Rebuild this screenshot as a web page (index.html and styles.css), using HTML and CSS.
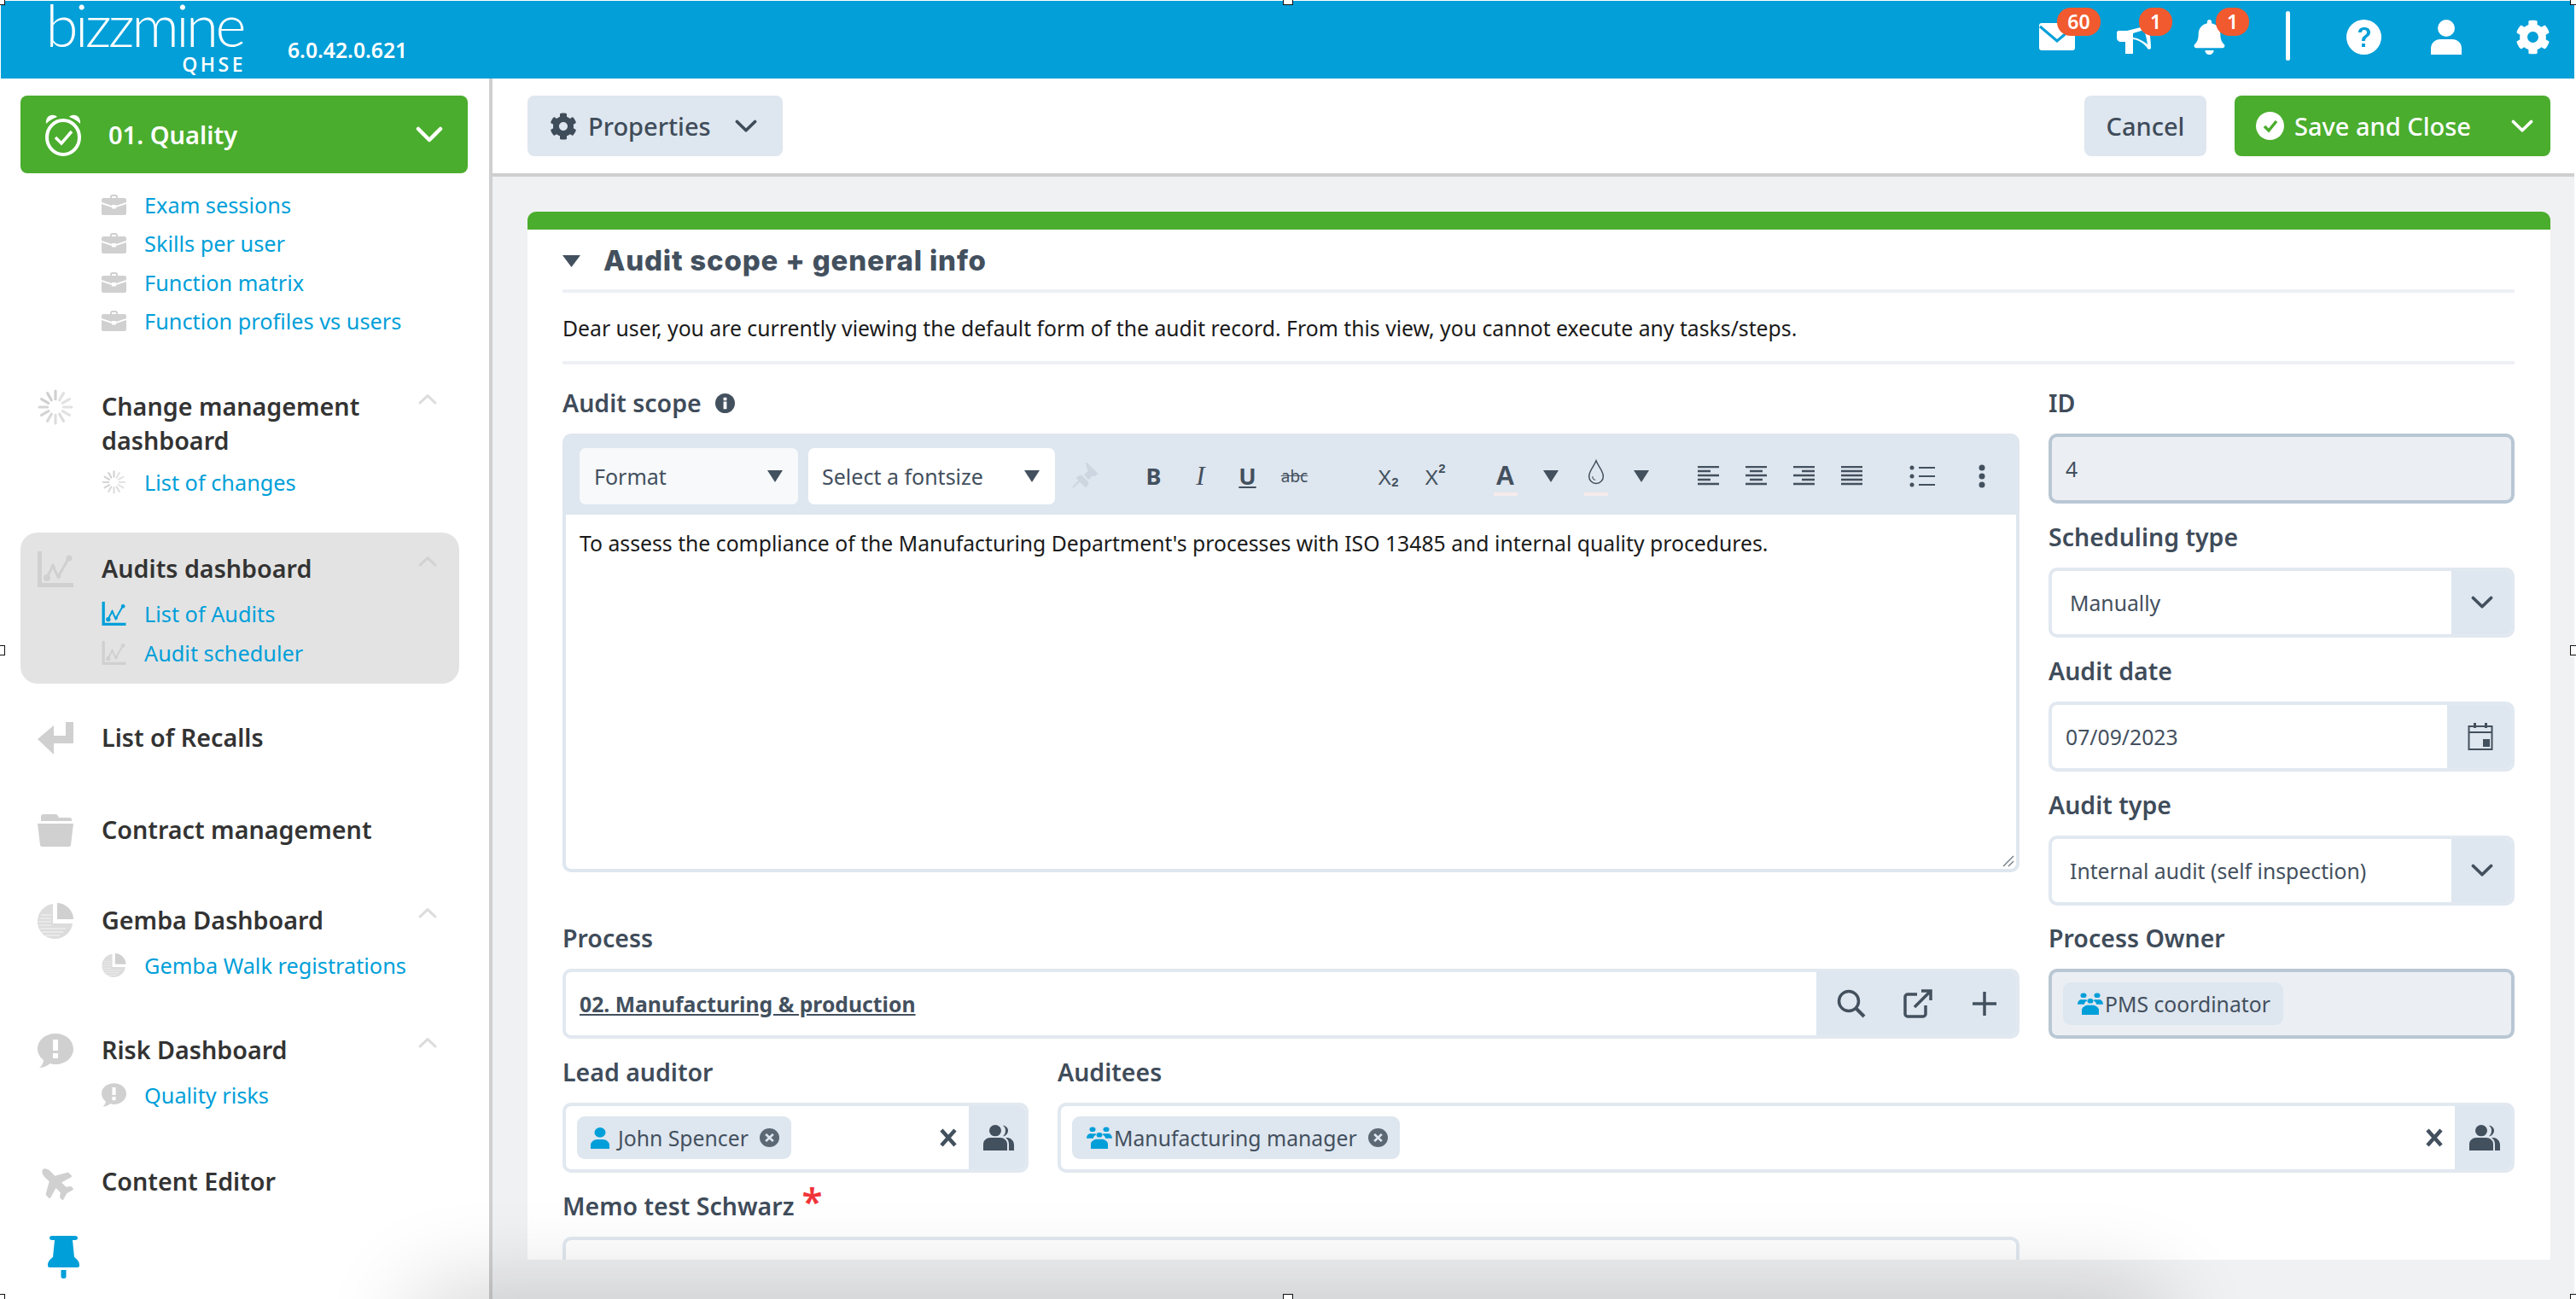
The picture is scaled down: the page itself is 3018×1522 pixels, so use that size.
FILE: index.html
```html
<!DOCTYPE html>
<html lang="en">
<head>
<meta charset="utf-8">
<title>BizzMine QHSE</title>
<link rel="stylesheet" href="styles.css">
</head>
<body>
<svg class="defs" aria-hidden="true">
  <symbol id="i-cog" viewBox="0 0 512 512"><path d="M487.4 315.7l-42.6-24.6c4.3-23.2 4.3-47 0-70.2l42.6-24.6c4.9-2.8 7.1-8.6 5.5-14-11.1-35.6-30-67.8-54.7-94.6-3.8-4.1-10-5.1-14.8-2.3L380.8 110c-17.9-15.4-38.5-27.3-60.8-35.1V25.8c0-5.6-3.9-10.5-9.4-11.7-36.7-8.2-74.3-7.8-109.2 0-5.5 1.2-9.4 6.1-9.4 11.7V75c-22.2 7.9-42.8 19.8-60.8 35.1L88.7 85.5c-4.9-2.8-11-1.9-14.8 2.3-24.7 26.7-43.6 58.9-54.7 94.6-1.7 5.4.6 11.2 5.5 14L67.3 221c-4.3 23.2-4.3 47 0 70.2l-42.6 24.6c-4.9 2.8-7.1 8.6-5.5 14 11.1 35.6 30 67.8 54.7 94.6 3.8 4.1 10 5.1 14.8 2.3l42.6-24.6c17.9 15.4 38.5 27.3 60.8 35.1v49.2c0 5.6 3.9 10.5 9.4 11.7 36.7 8.2 74.3 7.8 109.2 0 5.5-1.2 9.4-6.1 9.4-11.7v-49.2c22.2-7.9 42.8-19.8 60.8-35.1l42.6 24.6c4.9 2.8 11 1.9 14.8-2.3 24.7-26.7 43.6-58.9 54.7-94.6 1.5-5.5-.7-11.3-5.6-14.1zM256 336c-44.1 0-80-35.9-80-80s35.9-80 80-80 80 35.9 80 80-35.9 80-80 80z"/></symbol>
  <symbol id="i-bell" viewBox="0 0 448 512"><path d="M224 512c35.32 0 63.97-28.65 63.97-63.97H160.03C160.03 483.35 188.68 512 224 512zm215.39-149.71c-19.32-20.76-55.47-51.99-55.47-154.29 0-77.7-54.48-139.9-127.94-155.16V32c0-17.67-14.32-32-31.98-32s-31.98 14.33-31.98 32v20.84C118.56 68.1 64.08 130.3 64.08 208c0 102.3-36.15 133.53-55.47 154.29-6 6.45-8.66 14.16-8.61 21.71.11 16.4 12.98 32 32.1 32h383.8c19.12 0 32-15.6 32.1-32 .05-7.55-2.61-15.27-8.61-21.71z"/></symbol>
  <symbol id="i-plane" viewBox="0 0 576 576"><g transform="rotate(225 288 288) translate(0 32)"><path d="M480 192H365.71L260.61 8.06A16.014 16.014 0 0 0 246.71 0h-65.5c-10.63 0-18.3 10.17-15.38 20.39L214.86 192H112l-43.2-57.6c-3.02-4.03-7.77-6.4-12.8-6.4H16.01C5.6 128-2.04 137.78.49 147.88L32 256 .49 364.12C-2.04 374.22 5.6 384 16.01 384H56c5.04 0 9.78-2.37 12.8-6.4L112 320h102.86l-49.03 171.6c-2.92 10.22 4.75 20.4 15.38 20.4h65.5c5.74 0 11.04-3.08 13.89-8.06L365.71 320H480c35.35 0 96-28.65 96-64s-60.65-64-96-64z"/></g></symbol>
  <symbol id="i-briefcase" viewBox="0 0 29 24"><path d="M10 4V2.500C10 1 11 0 12.500 0h4C18 0 19 1 19 2.500V4h8c1 0 2 1 2 2v3L17 13v-1h-5v1L0 9V6c0-1 1-2 2-2zM12 4h5V2h-5z"/><path d="M0 11l12 4v1.500h5V15l12-4v11c0 1-1 2-2 2H2c-1 0-2-1-2-2z"/></symbol>
  <symbol id="i-spinner" viewBox="0 0 40 40"><g stroke-width="3" stroke-linecap="round" stroke="#d0d0d0">
    <path d="M20 2v9" /><path d="M20 29v9" opacity=".7"/><path d="M2 20h9" opacity=".9"/><path d="M29 20h9" opacity=".6"/>
    <path d="M11 4.400l4.500 7.800" /><path d="M24.500 27.800l4.500 7.800" opacity=".7"/><path d="M4.400 11l7.800 4.500"/><path d="M27.800 24.500l7.800 4.500" opacity=".6"/>
    <path d="M29 4.400l-4.500 7.800" opacity=".6"/><path d="M15.500 27.800L11 35.600" opacity=".8"/><path d="M35.600 11l-7.800 4.500" opacity=".6"/><path d="M12.200 24.500L4.400 29" opacity=".9"/>
  </g></symbol>
  <symbol id="i-chart" viewBox="0 0 42 42"><path d="M0 0h5v37h37v5H0z"/><path d="M10 32l8-15 6 13L37 7" fill="none" stroke="currentColor" stroke-width="3"/><circle cx="11" cy="31" r="4"/><circle cx="18" cy="18" r="2.500"/><circle cx="25" cy="29" r="2.500"/><circle cx="37" cy="8" r="3.500"/></symbol>
  <symbol id="i-recall" viewBox="0 0 42 38"><path d="M33 0h9v25H19v13L0 20 19 4v12h14z"/></symbol>
  <symbol id="i-folder" viewBox="0 0 42 38"><path d="M4 4V3c0-2 1-3 3-3h14c2 0 3 2 4 4h13c1 0 2 1 2 2v2H4z"/><path d="M0 11h42l-3 25c0 1-1 2-2 2H5c-1 0-2-1-2-2z"/></symbol>
  <symbol id="i-pie" viewBox="0 0 42 42"><path d="M18 1v23h23c-1 10-10 18-20.500 18C9 42 0 33 0 21.500 0 11 8 2 18 1z" opacity=".75"/><path d="M23 0c10 0 19 9 19 19H23z"/><path d="M3 30h30M2 26h14M1 22h15M2 18h14M4 14h12M5 34h25M9 38h17" stroke="#fff" stroke-opacity=".5" stroke-width="1.300"/></symbol>
  <symbol id="i-risk" viewBox="0 0 42 40"><path fill-rule="evenodd" d="M21 0c12 0 21 8 21 18s-9 18-21 18c-2 0-4 0-6-1-3 2-7 5-13 5 3-2 5-6 5-9C3 28 0 23 0 18 0 8 9 0 21 0zM18 7v13h6V7zM18 23v6h6v-6z"/></symbol>
  <symbol id="i-user" viewBox="0 0 22 34" preserveAspectRatio="none"><ellipse cx="11" cy="8" rx="6.500" ry="8"/><path d="M0 34v-6c0-5 4-9 8-9h6c4 0 8 4 8 9v6z"/></symbol>
  <symbol id="i-team" viewBox="0 0 32 32" preserveAspectRatio="none"><circle cx="8" cy="4" r="3.500"/><circle cx="24" cy="4" r="3.500"/><circle cx="16" cy="12" r="3.500"/><path d="M1 17c0-4 2-7 4-7h6c1 0 1 1 1 2-2 1-3 3-3 5zM31 17c0-4-2-7-4-7h-6c-1 0-1 1-1 2 2 1 3 3 3 5zM6 32v-7c0-4 4-7 7-7h6c3 0 7 3 7 7v7z"/></symbol>
  <symbol id="i-users" viewBox="0 0 36 36" preserveAspectRatio="none"><ellipse cx="14" cy="8" rx="7" ry="8"/><path d="M23 1c3 0 6 3 6 7s-3 8-6 8c2-2 3-5 3-8s-1-5-3-7z"/><path d="M0 36v-9c0-5 4-9 8-9h12c4 0 8 4 8 9v9z"/><path d="M29 18c4 1 7 5 7 10v8h-6v-9c0-3-1-7-4-9z"/></symbol>
  <symbol id="i-x" viewBox="0 0 22 22"><path d="M3 2l16 18M19 2L3 20" fill="none" stroke="currentColor" stroke-width="4.500"/></symbol>
  <symbol id="i-tri" viewBox="0 0 20 16" preserveAspectRatio="none"><path d="M0 0h20L10 16z"/></symbol>
  <symbol id="i-chev" viewBox="0 0 32 20" preserveAspectRatio="none"><path d="M3 3l13 13L29 3" fill="none" stroke="currentColor" stroke-width="4.500" stroke-linecap="round" stroke-linejoin="round"/></symbol>
  <symbol id="i-close" viewBox="0 0 24 24" preserveAspectRatio="none"><circle cx="12" cy="12" r="12"/><path d="M7.500 7.500l9 9M16.500 7.500l-9 9" stroke="#dee6ef" stroke-width="3"/></symbol>
</svg>

<div class="app">
  <header class="topbar">
    <div class="logo">
      <span class="logo-word">bizzmine</span>
      <span class="logo-sub">QHSE</span>
    </div>
    <span class="version">6.0.42.0.621</span>
    <div class="top-actions">
      <span class="notif notif-mail">
        <svg class="ic-mail" viewBox="0 0 42 32"><rect width="42" height="32" rx="3" fill="#fff"/><path d="M1 4l20 17L41 4" fill="none" stroke="#009fd9" stroke-width="3"/></svg>
        <b class="badge badge-wide">60</b>
      </span>
      <span class="notif notif-mega">
        <svg class="ic-mega" viewBox="0 0 40 33"><path fill="#fff" d="M2 6h10L36 0c3 8 4 19 4 27l-3 1C33 22 27 17 19 16v17h-9V19H5c-3 0-5-2-5-5V8c0-1 1-2 2-2z"/><path fill="#009fd9" d="M19 9l13-4c2 6 3 11 4 17-5-4-10-7-17-8z"/></svg>
        <b class="badge">1</b>
      </span>
      <span class="notif notif-bell">
        <svg class="ic-bell"><use href="#i-bell"/></svg>
        <b class="badge">1</b>
      </span>
      <span class="top-sep"></span>
      <svg class="ic-help" viewBox="0 0 41 41"><circle cx="20.500" cy="20.500" r="20.500" fill="#fff"/><path d="M14 15c0-4 3-6 7-6s7 2 7 6c0 5-6 5-6 10h-4c0-7 6-6 6-10 0-2-1-3-3-3s-3 1-3 3zM18 28h4v4h-4z" fill="#009fd9"/></svg>
      <svg class="ic-person" viewBox="0 0 36 41"><ellipse cx="18" cy="10" rx="10" ry="10"/><path d="M0 41v-7c0-7 5-11 11-11h14c6 0 11 4 11 11v7z"/></svg>
      <svg class="ic-cog-top"><use href="#i-cog"/></svg>
    </div>
  </header>

  <div class="shell">
    <aside class="sidebar">
      <div class="module">
        <svg class="module-icon" viewBox="0 0 44 50"><path d="M2 12C1 5 6 1 11 2c2 0 3 1 4 2C9 6 5 9 2 12zM42 12c1-7-4-11-9-10-2 0-3 1-4 2 6 2 10 5 13 8z" fill="#fff"/><ellipse cx="22" cy="28" rx="19" ry="20" fill="none" stroke="#fff" stroke-width="4"/><path d="M13 28l7 7 12-14" fill="none" stroke="#fff" stroke-width="3.500"/></svg>
        <span class="module-name">01. Quality</span>
        <svg class="module-chev"><use href="#i-chev"/></svg>
      </div>
      <ul class="sublist sublist-first">
        <li class="subitem"><svg class="subicon"><use href="#i-briefcase"/></svg><a class="sublink">Exam sessions</a></li>
        <li class="subitem"><svg class="subicon"><use href="#i-briefcase"/></svg><a class="sublink">Skills per user</a></li>
        <li class="subitem"><svg class="subicon"><use href="#i-briefcase"/></svg><a class="sublink">Function matrix</a></li>
        <li class="subitem"><svg class="subicon"><use href="#i-briefcase"/></svg><a class="sublink">Function profiles vs users</a></li>
      </ul>

      <section class="group group-wider">
        <div class="group-head"><svg class="group-icon"><use href="#i-spinner"/></svg><h3 class="group-title">Change management dashboard</h3><svg class="group-chev"><use href="#i-chev"/></svg></div>
        <ul class="sublist sublist-tight">
          <li class="subitem"><svg class="subicon"><use href="#i-spinner"/></svg><a class="sublink">List of changes</a></li>
        </ul>
      </section>

      <section class="group group-active">
        <div class="group-head"><svg class="group-icon"><use href="#i-chart"/></svg><h3 class="group-title">Audits dashboard</h3><svg class="group-chev"><use href="#i-chev"/></svg></div>
        <ul class="sublist">
          <li class="subitem"><svg class="subicon subicon-blue"><use href="#i-chart"/></svg><a class="sublink">List of Audits</a></li>
          <li class="subitem"><svg class="subicon"><use href="#i-chart"/></svg><a class="sublink">Audit scheduler</a></li>
        </ul>
      </section>

      <section class="group group-leaf">
        <div class="group-head"><svg class="group-icon"><use href="#i-recall"/></svg><h3 class="group-title">List of Recalls</h3></div>
      </section>
      <section class="group group-leaf group-narrower">
        <div class="group-head"><svg class="group-icon"><use href="#i-folder"/></svg><h3 class="group-title">Contract management</h3></div>
      </section>
      <section class="group">
        <div class="group-head"><svg class="group-icon"><use href="#i-pie"/></svg><h3 class="group-title">Gemba Dashboard</h3><svg class="group-chev"><use href="#i-chev"/></svg></div>
        <ul class="sublist">
          <li class="subitem"><svg class="subicon"><use href="#i-pie"/></svg><a class="sublink">Gemba Walk registrations</a></li>
        </ul>
      </section>
      <section class="group group-wider">
        <div class="group-head"><svg class="group-icon"><use href="#i-risk"/></svg><h3 class="group-title">Risk Dashboard</h3><svg class="group-chev"><use href="#i-chev"/></svg></div>
        <ul class="sublist">
          <li class="subitem"><svg class="subicon"><use href="#i-risk"/></svg><a class="sublink">Quality risks</a></li>
        </ul>
      </section>
      <section class="group group-leaf">
        <div class="group-head"><svg class="group-icon"><use href="#i-plane"/></svg><h3 class="group-title">Content Editor</h3></div>
      </section>
      <svg class="pin" viewBox="0 0 37 50"><path d="M5 0h27c2 0 3 1 3 2.500S34 5 32 5h-3l2 20c3 2 6 5 6 9v1c0 1-1 2-2 2H2c-1 0-2-1-2-2v-1c0-4 3-7 6-9L8 5H5C3 5 2 4 2 2.500S3 0 5 0z"/><path d="M15.500 40h6v8c0 1-1 2-3 2s-3-1-3-2z"/></svg>
    </aside>

    <main class="main">
      <div class="toolbar">
        <button class="btn btn-props">
          <svg class="btn-cog"><use href="#i-cog"/></svg>
          <span>Properties</span>
          <svg class="btn-chev"><use href="#i-chev"/></svg>
        </button>
        <div class="toolbar-right">
          <button class="btn btn-cancel">Cancel</button>
          <button class="btn btn-save">
            <svg class="save-check" viewBox="0 0 33 33"><circle cx="16.500" cy="16.500" r="16.500" fill="#fff"/><path d="M10 17l5 5 9-11" fill="none" stroke="#4aad2d" stroke-width="3.500"/></svg>
            <span>Save and Close</span>
            <svg class="save-chev"><use href="#i-chev"/></svg>
          </button>
        </div>
      </div>

      <div class="content">
        <article class="card">
          <header class="card-head">
            <svg class="card-tri"><use href="#i-tri"/></svg>
            <h2 class="card-title">Audit scope + general info</h2>
          </header>
          <p class="notice">Dear user, you are currently viewing the default form of the audit record. From this view, you cannot execute any tasks/steps.</p>

          <div class="form-top">
            <div class="col-wide">
              <div class="label"><span>Audit scope</span><svg class="info" viewBox="0 0 24 24"><circle cx="12" cy="12" r="12"/><path d="M10 10h4v9h-4zM10 5h4v3.500h-4z" fill="#fff"/></svg></div>
              <div class="editor">
                <div class="ed-tools">
                  <div class="ed-select ed-select-format"><span>Format</span><svg class="ed-tri"><use href="#i-tri"/></svg></div>
                  <div class="ed-select ed-select-size"><span>Select a fontsize</span><svg class="ed-tri"><use href="#i-tri"/></svg></div>
                  <span class="tool tool-pin"><svg class="ic-off" viewBox="0 0 32 32"><path d="M19 1l12 12-3 2-2-1-6 6c1 3 0 6-2 8L8 18c2-2 5-3 8-2l6-6-1-2zM11 21l-8 8" fill="#cdd6e0" stroke="#cdd6e0" stroke-width="2"/><path d="M3 3l26 26" stroke="#dee6ef" stroke-width="2"/></svg></span>
                  <span class="tool tool-b lead-27">B</span>
                  <span class="tool tool-i">I</span>
                  <span class="tool tool-u">U</span>
                  <span class="tool tool-s">abc</span>
                  <span class="tool tool-sx lead-55">X<sub>2</sub></span>
                  <span class="tool tool-sx">X<sup>2</sup></span>
                  <span class="tool tool-color lead-28">A<i class="swatch"></i></span>
                  <span class="tool tool-n"><svg class="ed-tri"><use href="#i-tri"/></svg></span>
                  <span class="tool tool-n tool-drop"><svg class="ic-drop" viewBox="0 0 24 36"><path d="M12 1c3 8 10 14 10 22a10 10 0 0 1-20 0C2 15 9 9 12 1z" fill="none" stroke="#43505e" stroke-width="1.800"/><path d="M7 23c0 3 2 5 4 5" fill="none" stroke="#43505e" stroke-width="1.500"/></svg><i class="swatch"></i></span>
                  <span class="tool tool-n"><svg class="ed-tri"><use href="#i-tri"/></svg></span>
                  <span class="tool tool-a lead-24"><svg class="ic-align" viewBox="0 0 25 24"><path d="M0 1h25M0 6h15M0 11h25M0 16h15M0 21h25"/></svg></span>
                  <span class="tool tool-a"><svg class="ic-align" viewBox="0 0 25 24"><path d="M0 1h25M5 6h15M0 11h25M5 16h15M0 21h25"/></svg></span>
                  <span class="tool tool-a"><svg class="ic-align" viewBox="0 0 25 24"><path d="M0 1h25M10 6h15M0 11h25M10 16h15M0 21h25"/></svg></span>
                  <span class="tool tool-a"><svg class="ic-align" viewBox="0 0 25 24"><path d="M0 1h25M0 6h25M0 11h25M0 16h25M0 21h25"/></svg></span>
                  <span class="tool tool-a lead-27"><svg class="ic-list" viewBox="0 0 30 26"><path d="M11 3h19M11 13h19M11 23h19" stroke="#43505e" stroke-width="2.200"/><circle cx="3" cy="3" r="2.500"/><circle cx="3" cy="13" r="2.500"/><circle cx="3" cy="23" r="2.500"/></svg></span>
                  <span class="tool tool-a lead-14"><svg class="ic-more" viewBox="0 0 8 28"><circle cx="4" cy="4" r="3.500"/><circle cx="4" cy="14" r="3.500"/><circle cx="4" cy="24" r="3.500"/></svg></span>
                </div>
                <div class="ed-body">To assess the compliance of the Manufacturing Department's processes with ISO 13485 and internal quality procedures.
                  <svg class="resize" viewBox="0 0 14 14"><path d="M1 13L13 1M7 13l6-6" stroke="#6b7680" stroke-width="1.300"/></svg>
                </div>
              </div>
            </div>
            <div class="col-narrow">
              <div class="field-group">
                <div class="label">ID</div>
                <div class="input input-ro"><span class="val val-ro">4</span></div>
              </div>
              <div class="field-group">
                <div class="label">Scheduling type</div>
                <div class="input"><span class="val val-sel">Manually</span><span class="addon addon-sel"><svg class="addon-chev"><use href="#i-chev"/></svg></span></div>
              </div>
              <div class="field-group">
                <div class="label">Audit date</div>
                <div class="input"><span class="val val-ro">07/09/2023</span><span class="addon addon-date"><svg class="ic-cal" viewBox="0 0 30 34"><path d="M1.500 5h27v27h-27zM1.500 12h27" fill="none" stroke="#43505e" stroke-width="2"/><path d="M7 1h3v6H7zM20 1h3v6h-3zM18 20h8v9h-8z" fill="#43505e"/></svg></span></div>
              </div>
              <div class="field-group">
                <div class="label">Audit type</div>
                <div class="input"><span class="val val-sel">Internal audit (self inspection)</span><span class="addon addon-sel"><svg class="addon-chev"><use href="#i-chev"/></svg></span></div>
              </div>
            </div>
          </div>

          <div class="form-row form-row-main">
            <div class="field-group">
              <div class="label">Process</div>
              <div class="input"><a class="val val-link">02. Manufacturing &amp; production</a>
                <span class="addon addon-proc">
                  <svg class="ic-tool" viewBox="0 0 34 34"><circle cx="14" cy="14" r="11.500" fill="none" stroke="#43505e" stroke-width="3.500"/><path d="M22 22l10 10" stroke="#43505e" stroke-width="4"/></svg>
                  <svg class="ic-tool" viewBox="0 0 34 34"><path d="M16 6H5a3 3 0 0 0-3 3v20a3 3 0 0 0 3 3h18a3 3 0 0 0 3-3V19M13 21L31 3M21 2h11v11" fill="none" stroke="#43505e" stroke-width="3.500"/></svg>
                  <svg class="ic-tool" viewBox="0 0 34 34"><path d="M17 3v28M3 17h28" stroke="#43505e" stroke-width="3.500"/></svg>
                </span>
              </div>
            </div>
            <div class="field-group">
              <div class="label">Process Owner</div>
              <div class="input input-ro"><span class="chip chip-ro"><svg class="chip-team"><use href="#i-team"/></svg>PMS coordinator</span></div>
            </div>
          </div>

          <div class="form-row form-row-people">
            <div class="field-group">
              <div class="label">Lead auditor</div>
              <div class="input">
                <span class="chip"><svg class="chip-user"><use href="#i-user"/></svg>John Spencer<svg class="chip-close"><use href="#i-close"/></svg></span>
                <svg class="ic-clear"><use href="#i-x"/></svg>
                <span class="addon addon-people"><svg class="ic-users"><use href="#i-users"/></svg></span>
              </div>
            </div>
            <div class="field-group">
              <div class="label">Auditees</div>
              <div class="input">
                <span class="chip"><svg class="chip-team"><use href="#i-team"/></svg>Manufacturing manager<svg class="chip-close"><use href="#i-close"/></svg></span>
                <svg class="ic-clear"><use href="#i-x"/></svg>
                <span class="addon addon-people"><svg class="ic-users"><use href="#i-users"/></svg></span>
              </div>
            </div>
          </div>

          <div class="memo">
            <div class="label"><span>Memo test Schwarz</span><span class="req">*</span></div>
            <div class="input input-memo"></div>
          </div>
        </article>
      </div>
    </main>
  </div>

  <div class="window-shadow"></div>
  <i class="handle h-tl"></i><i class="handle h-tc"></i><i class="handle h-tr"></i>
  <i class="handle h-ml"></i><i class="handle h-mr"></i>
  <i class="handle h-bl"></i><i class="handle h-bc"></i><i class="handle h-br"></i>
</div>
</body>
</html>
```

FILE: styles.css
```css
* { box-sizing: border-box; }
html, body { margin: 0; padding: 0; background: #fff; }
body { font-family: "Noto Sans", sans-serif; color: #3f4c5a; }
.defs { position: absolute; width: 0; height: 0; }
ul { list-style: none; margin: 0; padding: 0; }
h2, h3, p { margin: 0; }
svg { display: block; flex: none; fill: currentColor; }

.app { position: relative; width: 3018px; height: 1522px; overflow: hidden; padding: 1px 2px 0 1px; display: flex; flex-direction: column; }

/* top bar */
.topbar { height: 91px; flex: none; background: #029fd8; display: flex; align-items: flex-start; position: relative; color: #fff; }
.logo { margin-left: 49px; width: 235px; display: flex; flex-direction: column; align-items: flex-end; }
.logo-word { font-family: Lato, sans-serif; font-weight: 300; font-size: 69px; line-height: 56px; letter-spacing: -3.500px; white-space: nowrap; }
.logo-sub { font-family: "Open Sans", sans-serif; font-weight: 600; font-size: 23px; line-height: 24px; letter-spacing: 3.500px; margin-top: 6px; margin-right: -3px; }
.version { margin: 44px 0 0 52px; font-size: 24.700px; line-height: 28px; font-weight: 600; }
.top-actions { margin-left: auto; display: flex; align-items: flex-start; height: 100%; padding-right: 28px; }
.notif { position: relative; display: block; height: 90px; }
.notif-mail { width: 42px; }
.notif-mega { width: 40px; margin-left: 49px; }
.notif-bell { width: 37px; margin-left: 50px; }
.ic-mail { width: 42px; height: 32px; margin-top: 26px; }
.ic-mega { width: 40px; height: 33px; margin-top: 29px; }
.ic-bell { width: 37px; height: 41px; margin-top: 22px; color: #fff; }
.badge { position: absolute; top: 8px; height: 33px; min-width: 39px; border-radius: 16px; background: #f15a2e; color: #fff; font-size: 23px; line-height: 32px; font-weight: 600; text-align: center; }
.badge-wide { min-width: 51px; left: 21px; }
.notif-mega .badge { left: 26px; }
.notif-bell .badge { left: 26px; }
.top-sep { width: 5px; height: 58px; margin: 12px 0 0 71px; background: #fff; border-radius: 3px; }
.ic-help { width: 41px; height: 41px; margin: 22px 0 0 66px; }
.ic-person { width: 36px; height: 41px; margin: 22px 0 0 58px; color: #fff; }
.ic-cog-top { width: 41px; height: 41px; margin: 22px 0 0 63px; color: #fff; }

.shell { flex: 1; min-height: 0; display: flex; }

/* sidebar */
.sidebar { width: 576px; flex: none; border-right: 4px solid #cfcfcf; padding: 20px 0 0 23px; background: #fff; display: flex; flex-direction: column; }
.module { width: 524px; height: 91px; flex: none; background: #4aad2d; border-radius: 8px; display: flex; align-items: center; color: #fff; padding-left: 28px; }
.module-icon { width: 44px; height: 50px; }
.module-name { margin-left: 31px; font-size: 29px; font-weight: 600; }
.module-chev { width: 32px; height: 20px; margin-left: auto; margin-right: 29px; color: #fff; }

.sublist { margin-top: 10px; padding-left: 95px; }
.sublist-first { margin: 14px 0 35px; }
.sublist-tight { margin-top: 6px; }
.subitem { height: 46px; display: flex; align-items: center; }
.sublist-first .subitem { height: 45.500px; }
.subicon { width: 29px; height: 28px; color: #d0d0d0; }
.subicon-blue { color: #009fd9; }
.sublink { margin-left: 21px; font-size: 25.300px; color: #009fd9; white-space: nowrap; }

.group { width: 514px; flex: none; padding: 22px 0 13px 0; margin-bottom: 21px; border-radius: 20px; }
.group-wider { margin-bottom: 23px; }
.group-narrower { margin-bottom: 19px; }
.group-leaf { padding-bottom: 25px; }
.group-active { background: #e3e3e3; }
.group-head { display: flex; align-items: flex-start; padding: 0 26px 0 20px; }
.group-icon { width: 42px; height: 42px; margin-bottom: -2px; color: #d0d0d0; }
.group-title { margin-left: 33px; width: 340px; font-size: 28.700px; line-height: 40px; font-weight: 600; color: #333; }
.group-chev { width: 22px; height: 13px; margin: 5px 0 0 auto; color: #dcdcdc; transform: rotate(180deg); }
.group-active .group-chev { color: #d2d2d2; }
.group-active .group-icon { color: #d0d0d0; }
.pin { width: 37px; height: 50px; margin: -2px 0 0 32px; color: #009fd9; }

/* main */
.main { flex: 1; min-width: 0; display: flex; flex-direction: column; }
.toolbar { height: 115px; flex: none; border-bottom: 4px solid #cfcfcf; background: #fff; padding: 20px 28px 0 41px; display: flex; justify-content: space-between; align-items: flex-start; }
.toolbar-right { display: flex; gap: 33px; }
.btn { height: 71px; border: 0; border-radius: 8px; background: #dee6ef; color: #3f4c5a; font: 500 29px "Noto Sans", sans-serif; display: flex; align-items: center; padding: 0; }
.btn-props { width: 299px; padding-left: 26px; }
.btn-cog { width: 32px; height: 32px; margin-right: 13px; }
.btn-chev { width: 26px; height: 16px; margin-left: 28px; }
.btn-cancel { width: 143px; justify-content: center; }
.btn-save { width: 370px; background: #4aad2d; color: #fff; padding-left: 25px; }
.save-check { width: 33px; height: 33px; margin-right: 12px; }
.save-chev { width: 26px; height: 16px; margin-left: auto; margin-right: 20px; }

.content { flex: 1; min-height: 0; background: #f0f1f3; padding: 41px 28px 46px 41px; display: flex; }
.card { flex: 1; min-width: 0; background: #fff; border-top: 21px solid #4aad2d; border-radius: 10px 10px 0 0; padding: 0 42px 0 41px; overflow: hidden; }
.card-head { height: 74px; padding-top: 2px; border-bottom: 4px solid #edf0f5; display: flex; align-items: center; }
.card-tri { width: 21px; height: 14px; margin: 2px 27px 0 0; color: #43505e; }
.card-title { font-family: Inter, sans-serif; font-size: 33px; font-weight: 800; color: #43505e; letter-spacing: .8px; }
.notice { height: 84px; border-bottom: 4px solid #edf0f5; font-size: 24.750px; line-height: 84px; color: #1a1a1a; white-space: nowrap; }

.label { height: 38px; margin-bottom: 17px; font-size: 28.500px; line-height: 38px; font-weight: 600; color: #3f4c5a; display: flex; align-items: center; white-space: nowrap; }
.info { width: 23px; height: 23px; margin-left: 16px; color: #43505e; }
.req { color: #f0343a; font-size: 44px; line-height: 38px; height: 38px; margin-top: -12px; margin-left: 9px; }

.form-top { display: flex; gap: 34px; padding-top: 26px; }
.col-wide { width: 1707px; flex: none; }
.col-narrow { flex: 1; min-width: 0; display: flex; flex-direction: column; gap: 20px; }

.editor { height: 514px; border: 4px solid #dee6ef; border-radius: 10px; display: flex; flex-direction: column; }
.ed-tools { height: 91px; flex: none; background: #dee6ef; display: flex; align-items: center; padding: 0 0 0 16px; }
.ed-select { height: 66px; background: #fff; border-radius: 7px; display: flex; align-items: center; justify-content: space-between; font-size: 25px; color: #43505e; flex: none; }
.ed-select-format { width: 256px; margin-right: 12px; background: #f7f9fb; padding: 0 18px 0 17px; }
.ed-select-size { width: 289px; padding: 0 18px 0 16px; }
.ed-tri { width: 18px; height: 14px; color: #43505e; }
.tool { width: 55px; height: 60px; flex: none; display: flex; align-items: center; justify-content: center; color: #43505e; font-size: 27px; position: relative; }
.tool-pin { margin-left: 6px; }
.ic-off { width: 32px; height: 32px; }
.lead-27 { margin-left: 27px; }
.lead-55 { margin-left: 55px; }
.lead-28 { margin-left: 28px; }
.lead-24 { margin-left: 24px; }
.lead-14 { margin-left: 14px; }
.tool-b { font-weight: 700; }
.tool-i { font-family: "Liberation Serif", serif; font-style: italic; font-size: 31px; }
.tool-u { font-weight: 700; text-decoration: underline; font-size: 27px; }
.tool-s { font-size: 19px; text-decoration: line-through; }
.tool-sx { font-size: 24px; font-family: "Liberation Sans", sans-serif; font-weight: 400; padding-top: 4px; }
.tool-sx sub, .tool-sx sup { font-size: 15px; font-weight: 700; line-height: 0; position: relative; vertical-align: baseline; }
.tool-sx sub { top: 5px; }
.tool-sx sup { top: -11px; }
.tool-color { width: 53px; font-weight: 700; font-size: 31px; font-family: "Liberation Sans Narrow", "Liberation Sans", sans-serif; }
.tool-n { width: 53px; }
.tool-a { width: 56px; }
.swatch { position: absolute; left: 13px; bottom: 7px; width: 28px; height: 4px; background: #f6ecec; }
.ic-drop { width: 20px; height: 36px; margin-top: -8px; }
.ic-align { width: 25px; height: 24px; stroke: #43505e; stroke-width: 2.400; }
.ic-list { width: 30px; height: 26px; color: #43505e; }
.ic-more { width: 8px; height: 28px; color: #43505e; }
.ed-body { flex: 1; position: relative; padding: 17px 16px; font-size: 24.750px; line-height: 34px; color: #1a1a1a; }
.resize { position: absolute; right: 2px; bottom: 2px; width: 14px; height: 14px; }

.input { height: 82px; border: 4px solid #e1e8f0; border-radius: 10px; display: flex; align-items: center; background: #fff; position: relative; overflow: hidden; }
.input-ro { background: #ebeff4; border-color: #b9c7d4; }
.val { font-size: 24.750px; color: #43505e; white-space: nowrap; }
.val-ro { margin-left: 16px; }
.val-sel { margin-left: 21px; }
.val-link { margin-left: 16px; font-weight: 700; text-decoration: underline; }
.addon { align-self: stretch; margin-left: auto; background: #dee6ef; display: flex; align-items: center; justify-content: center; flex: none; padding-left: 2px; }
.addon-sel { width: 70px; }
.addon-date { width: 75px; }
.addon-chev { width: 26px; height: 16px; color: #43505e; }
.ic-cal { width: 30px; height: 34px; }
.addon-proc { width: 234px; gap: 44px; padding-left: 4px; }
.ic-tool { width: 34px; height: 34px; }
.addon-people { width: 66px; padding-left: 3px; }
.ic-users { width: 36px; height: 30px; color: #43505e; }
.ic-clear { width: 22px; height: 22px; margin-left: auto; margin-right: 13px; color: #43505e; }
.ic-clear + .addon { margin-left: 0; }

.form-row { display: grid; padding-top: 20px; }
.form-row-main { grid-template-columns: 1707px 1fr; column-gap: 34px; padding-top: 19px; }
.form-row-people { grid-template-columns: 546px 1fr; column-gap: 34px; }

.chip { height: 50px; margin-left: 13px; padding: 0 14px 0 16px; background: #dee6ef; border-radius: 9px; display: flex; align-items: center; font-size: 24.750px; color: #43505e; white-space: nowrap; }
.chip-ro { padding: 0 15px 0 16px; }
.chip-team { width: 32px; height: 26px; margin-right: 1px; color: #009fd9; }
.chip-user { width: 22px; height: 25px; margin-right: 10px; color: #009fd9; }
.chip-close { width: 23px; height: 22px; margin-left: 13px; color: #5c6975; }

.memo { padding-top: 20px; }
.input-memo { width: 1707px; height: 120px; }

/* window shadow and selection handles laid over the capture */
.window-shadow { position: absolute; left: 520px; width: 1980px; top: 1545px; height: 40px; box-shadow: 0 0 110px 30px rgba(0,0,0,.2); pointer-events: none; }
.handle { position: absolute; width: 12px; height: 12px; background: #fff; border: 1px solid #111; }
.h-tl { left: -6px; top: -6px; }
.h-tc { left: 1503px; top: -6px; }
.h-tr { right: -5px; top: -6px; }
.h-ml { left: -6px; top: 756px; }
.h-mr { right: -5px; top: 756px; }
.h-bl { left: -6px; bottom: -6px; }
.h-bc { left: 1503px; bottom: -6px; }
.h-br { right: -5px; bottom: -6px; }
```
